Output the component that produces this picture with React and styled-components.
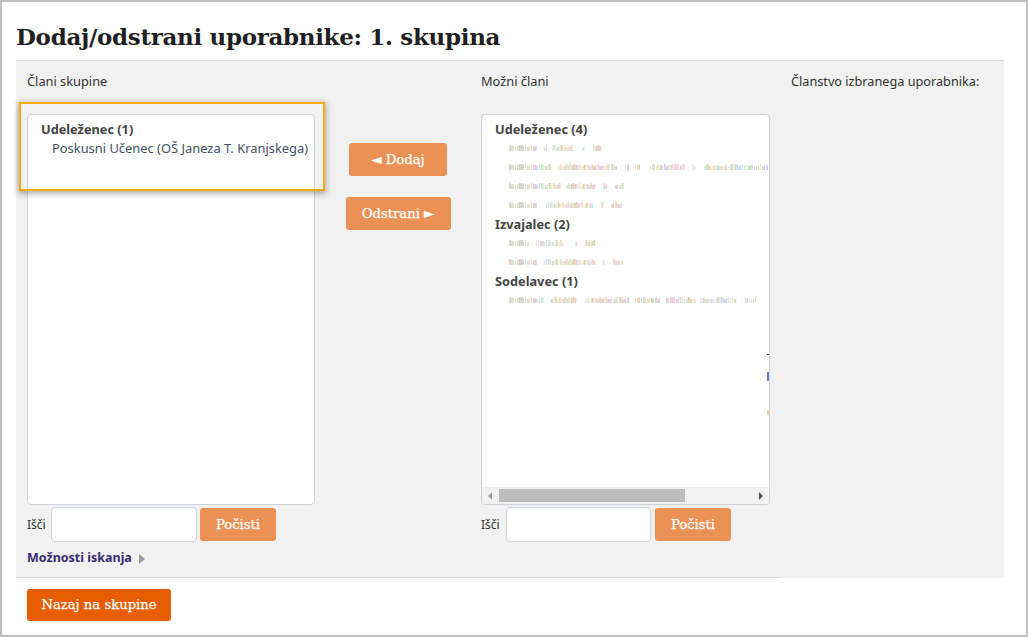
import React from 'react';
import styled, { createGlobalStyle } from 'styled-components';

const Global = createGlobalStyle`
  html, body { margin: 0; padding: 0; background: #fff; }
  * { box-sizing: border-box; }
`;
const SANS = `"Noto Sans", "Open Sans", sans-serif`;
const SERIF = `"DejaVu Serif", "Liberation Serif", serif`;

const Frame = styled.div`
  width: 1028px; height: 637px; border: 2px solid #bfbfbf; padding: 0 22px 0 14px;
  font-family: ${SANS}; color: #333; overflow: hidden; position: relative;
`;
const Title = styled.h1`
  margin: 0; height: 58px; padding-top: 17px; font: bold 23px/36px ${SERIF}; letter-spacing: -0.33px; color: #1f1f24;
`;
const Panel = styled.div`
  height: 518px; background: #f1f1f1; border-top: 1px solid #dcdcdc;
  display: grid; grid-template-columns: 764px 1fr; position: relative;
`;
const Main = styled.div`
  height: 517px; border-bottom: 1px solid #d9d9d9; padding: 0 0 0 11px;
  display: grid; grid-template-columns: 288px 166px 289px; align-content: start;
`;
const Column = styled.div`
  display: flex; flex-direction: column;
`;
const Heading = styled.div`
  height: 53px; padding-top: 11px; font-size: 12.8px; line-height: 18px; color: #333;
`;
const ListBox = styled.div`
  height: 391px; background: #fff; border: 1px solid #ced4da; border-radius: 4px;
  padding: 5px 0 0 13px; position: relative; overflow: hidden;
`;
const Group = styled.div`
  font-weight: 700; font-size: 12.75px; line-height: 19px; color: #444;
`;
const Option = styled.div`
  padding-left: 11px; font-size: 12.9px; line-height: 19px; color: #445063; white-space: nowrap;
`;
const SmudgeRow = styled.div`
  height: 19px; padding-left: 14px; display: flex; align-items: center;
`;
const Scrollbar = styled.div`
  position: absolute; left: 0; right: 0; bottom: 0; height: 17px; background: #f1f1f1;
  display: flex; align-items: center; padding: 0 6px; justify-content: space-between;
`;
const Thumb = styled.div`
  position: absolute; left: 17px; top: 2px; width: 186px; height: 13px; background: #bdbdbd;
`;
const Arrow = styled.span`
  width: 0; height: 0; border-top: 4px solid transparent; border-bottom: 4px solid transparent;
  ${p => p.$left ? `border-right: 4px solid #a3a3a3;` : `border-left: 4px solid #505050;`}
`;
const SearchRow = styled.div`
  display: flex; align-items: center; height: 37px; margin-top: 1px;
`;
const SearchLabel = styled.label`
  width: ${p => p.$w}px; font-size: 12px; color: #333;
`;
const Input = styled.input`
  width: ${p => p.$w}px; height: 35px; border: 1px solid #ced4da; border-radius: 4px; background: #fff; padding: 0;
  margin-right: ${p => p.$gap}px;
`;
const Btn = styled.button`
  border: none; border-radius: 3px; color: #fff; padding: 0; height: ${p => p.$h || 33}px;
  width: ${p => p.$w}px; background: ${p => p.$strong ? '#e85d00' : '#ec9155'};
  font: 13.2px/1 ${SERIF}; display: block; -webkit-text-stroke: 0.25px #fff;
`;
const Options = styled.a`
  display: flex; align-items: center; gap: 7px; margin-top: 6px; font-size: 12.5px; line-height: 18px;
  font-weight: 700; color: #3a2b74;
`;
const Tri = styled.span`
  width: 0; height: 0; border-top: 5px solid transparent; border-bottom: 5px solid transparent;
  border-left: 6px solid #9b9b9b; margin-top: 2px;
`;
const Middle = styled.div`
  padding-top: 82px; display: flex; flex-direction: column; align-items: center; gap: 21px;
`;
const Side = styled.div`
  padding: 11px 0 0 11px; font-size: 12.7px; line-height: 18px; color: #333; white-space: nowrap;
`;
const Footer = styled.div`
  padding: 11px 0 0 11px;
`;
const Highlight = styled.div`
  position: absolute; left: 3px; top: 41px; width: 306px; height: 89px;
  border: 2px solid #f6ab00; box-shadow: 0 2px 6px 1px rgba(0,0,0,.3); pointer-events: none;
`;
const Stray = styled.i`
  position: absolute; right: 0; width: 2px; top: ${p => p.$t}px; height: ${p => p.$h}px; background: ${p => p.$c};
`;

function Smudge({ segs }) {
  const pal = ['#ecd0e2', '#d3e9ca', '#efe3b8', '#cbdcf0', '#dcd4b4', '#dccff0', '#c9d2b6', '#f2d8be', '#d7d7d7', '#f0c8d8', '#c8ead8'];
  const rects = [];
  let s = 12345;
  segs.forEach(([a, b]) => {
    for (let x = a; x < b; x += 2) {
      s = (s * 1103515245 + 12345) % 2147483648;
      const r = Math.floor(s / 65536);
      const t = r % 3;
      const c = Math.floor(r / 7) % pal.length;
      rects.push(<rect key={x} x={x} y={1 + t} width={r % 2 ? 1 : 2} height={6 - t} fill={pal[c]} />);
    }
  });
  return <svg width="262" height="9" viewBox="0 0 262 9">{rects}</svg>;
}

const rows = {
  a: [[0,27],[35,38],[44,64],[74,76],[85,93]],
  b: [[0,42],[49,108],[117,120],[127,132],[142,178],[185,188],[197,261]],
  c: [[0,52],[58,87],[95,98],[107,117]],
  d: [[0,28],[37,85],[93,95],[103,115]],
  e: [[0,20],[27,55],[67,69],[77,87]],
  f: [[0,28],[35,87],[95,97],[105,115]],
  g: [[0,35],[42,68],[77,120],[127,152],[158,188],[193,228],[238,250]],
};

export default function App() {
  return (
    <Frame>
      <Global />
      <Title>Dodaj/odstrani uporabnike: 1. skupina</Title>
      <Panel>
        <Main>
          <Column>
            <Heading>Člani skupine</Heading>
            <ListBox>
              <Group>Udeleženec (1)</Group>
              <Option>Poskusni Učenec (OŠ Janeza T. Kranjskega)</Option>
            </ListBox>
            <SearchRow>
              <SearchLabel $w={24}>Išči</SearchLabel>
              <Input $w={146} $gap={3} />
              <Btn $w={76}>Počisti</Btn>
            </SearchRow>
            <Options>Možnosti iskanja <Tri /></Options>
          </Column>
          <Middle>
            <Btn $w={98}>◄ Dodaj</Btn>
            <Btn $w={105}>Odstrani ►</Btn>
          </Middle>
          <Column>
            <Heading>Možni člani</Heading>
            <ListBox>
              <Group>Udeleženec (4)</Group>
              <SmudgeRow><Smudge segs={rows.a} /></SmudgeRow>
              <SmudgeRow><Smudge segs={rows.b} /></SmudgeRow>
              <SmudgeRow><Smudge segs={rows.c} /></SmudgeRow>
              <SmudgeRow><Smudge segs={rows.d} /></SmudgeRow>
              <Group>Izvajalec (2)</Group>
              <SmudgeRow><Smudge segs={rows.e} /></SmudgeRow>
              <SmudgeRow><Smudge segs={rows.f} /></SmudgeRow>
              <Group>Sodelavec (1)</Group>
              <SmudgeRow><Smudge segs={rows.g} /></SmudgeRow>
              <Stray $t={239} $h={1} $c="#3b4a8a" />
              <Stray $t={257} $h={9} $c="#6a7fd0" />
              <Stray $t={295} $h={5} $c="#f3cf9c" />
              <Scrollbar>
                <Arrow $left />
                <Thumb />
                <Arrow />
              </Scrollbar>
            </ListBox>
            <SearchRow>
              <SearchLabel $w={25}>Išči</SearchLabel>
              <Input $w={145} $gap={4} />
              <Btn $w={76}>Počisti</Btn>
            </SearchRow>
          </Column>
        </Main>
        <Side>Članstvo izbranega uporabnika:</Side>
        <Highlight />
      </Panel>
      <Footer>
        <Btn $strong $w={144} $h={32}>Nazaj na skupine</Btn>
      </Footer>
    </Frame>
  );
}
